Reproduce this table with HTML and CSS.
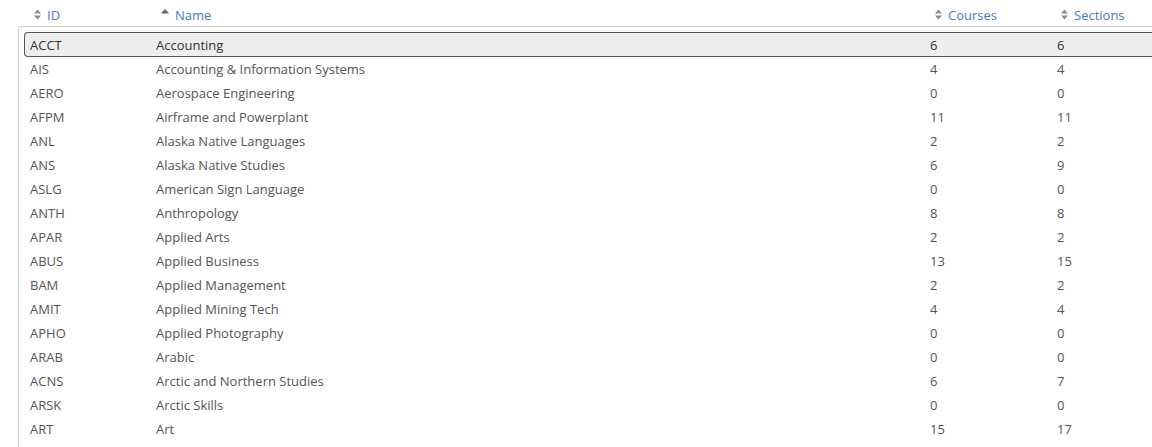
FILE: index.html
```html
<!DOCTYPE html>
<html>
<head>
<meta charset="utf-8">
<link rel="stylesheet" href="styles.css">
</head>
<body>
<div class="header">
  <a class="hcell c-id"><svg class="sort" viewBox="0 0 7 11"><path d="M3.5 0.5L7 4.5H0Z M3.5 10.5L7 6.5H0Z"/></svg>ID</a>
  <a class="hcell c-name"><svg class="sort asc" viewBox="0 0 8 5"><path d="M4 0L8 4.5H0Z"/></svg>Name</a>
  <a class="hcell c-courses"><svg class="sort" viewBox="0 0 7 11"><path d="M3.5 0.5L7 4.5H0Z M3.5 10.5L7 6.5H0Z"/></svg>Courses</a>
  <a class="hcell c-sections"><svg class="sort" viewBox="0 0 7 11"><path d="M3.5 0.5L7 4.5H0Z M3.5 10.5L7 6.5H0Z"/></svg>Sections</a>
</div>
<div class="panel">
  <div class="row selected"><span>ACCT</span><span>Accounting</span><span>6</span><span>6</span></div>
  <div class="row"><span>AIS</span><span>Accounting &amp; Information Systems</span><span>4</span><span>4</span></div>
  <div class="row"><span>AERO</span><span>Aerospace Engineering</span><span>0</span><span>0</span></div>
  <div class="row"><span>AFPM</span><span>Airframe and Powerplant</span><span>11</span><span>11</span></div>
  <div class="row"><span>ANL</span><span>Alaska Native Languages</span><span>2</span><span>2</span></div>
  <div class="row"><span>ANS</span><span>Alaska Native Studies</span><span>6</span><span>9</span></div>
  <div class="row"><span>ASLG</span><span>American Sign Language</span><span>0</span><span>0</span></div>
  <div class="row"><span>ANTH</span><span>Anthropology</span><span>8</span><span>8</span></div>
  <div class="row"><span>APAR</span><span>Applied Arts</span><span>2</span><span>2</span></div>
  <div class="row"><span>ABUS</span><span>Applied Business</span><span>13</span><span>15</span></div>
  <div class="row"><span>BAM</span><span>Applied Management</span><span>2</span><span>2</span></div>
  <div class="row"><span>AMIT</span><span>Applied Mining Tech</span><span>4</span><span>4</span></div>
  <div class="row"><span>APHO</span><span>Applied Photography</span><span>0</span><span>0</span></div>
  <div class="row"><span>ARAB</span><span>Arabic</span><span>0</span><span>0</span></div>
  <div class="row"><span>ACNS</span><span>Arctic and Northern Studies</span><span>6</span><span>7</span></div>
  <div class="row"><span>ARSK</span><span>Arctic Skills</span><span>0</span><span>0</span></div>
  <div class="row"><span>ART</span><span>Art</span><span>15</span><span>17</span></div>
</div>
</body>
</html>
```
FILE: styles.css
```css
html, body {
  margin: 0;
  padding: 0;
  background: #fff;
  font-family: "Open Sans", "Liberation Sans", sans-serif;
  font-size: 13px;
  color: #555;
  overflow: hidden;
  height: 447px;
}
.header {
  display: grid;
  grid-template-columns: 126px 774px 127px 1fr;
  padding-left: 34px;
  height: 26px;
  align-items: center;
}
.hcell {
  color: #3f7cc0;
  display: flex;
  align-items: center;
  gap: 6px;
  margin-top: 3px;
}
.c-name { padding-left: 1px; }
.c-courses { padding-left: 1px; }
.sort {
  width: 7px;
  height: 11px;
  fill: #8a8a8a;
}
.sort.asc {
  width: 8px;
  height: 5px;
  fill: #666;
  margin-top: -7px;
}
.panel {
  margin-left: 18px;
  border-top: 1px solid #ccc;
  border-left: 1px solid #ccc;
  border-top-left-radius: 4px;
  padding: 6px 0 0 5px;
  height: 421px;
  box-sizing: border-box;
}
.row {
  display: grid;
  grid-template-columns: 126px 774px 127px 1fr;
  align-items: center;
  padding-left: 5px;
  border: 1px solid transparent;
  border-right: none;
  box-sizing: border-box;
  height: 25px;
  margin-top: -1px;
  margin-bottom: -1px;
}
.row.selected {
  background: #eee;
  border-color: #555;
  border-radius: 4px 0 0 4px;
  color: #333;
}
```
